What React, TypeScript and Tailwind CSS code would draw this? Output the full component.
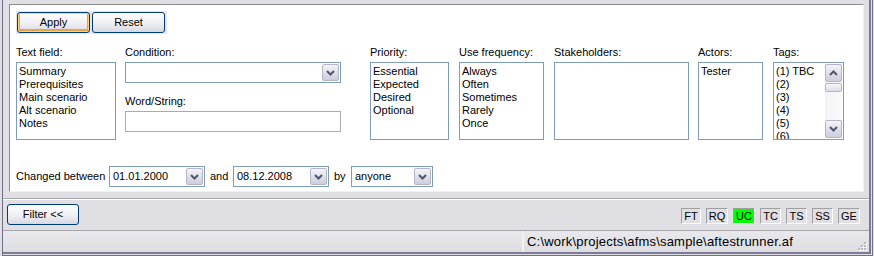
import React from "react";

const listItems = {
    textField: ["Summary", "Prerequisites", "Main scenario", "Alt scenario", "Notes"],
    priority: ["Essential", "Expected", "Desired", "Optional"],
    frequency: ["Always", "Often", "Sometimes", "Rarely", "Once"],
    stakeholders: [] as string[],
    actors: ["Tester"],
    tags: ["(1) TBC", "(2)", "(3)", "(4)", "(5)", "(6)"],
};

const indicators = [
    { label: "FT", w: "w-[20px]" },
    { label: "RQ", w: "w-[22px]" },
    { label: "UC", w: "w-[22px]", active: true },
    { label: "TC", w: "w-[21px]" },
    { label: "TS", w: "w-[21px]" },
    { label: "SS", w: "w-[21px]" },
    { label: "GE", w: "w-[22px]" },
];

function Chevron({ up = false }: { up?: boolean }) {
    return (
        <svg width="9" height="6" viewBox="0 0 9 6">
            <path
                d={up ? "M1 5 L4.5 1.5 L8 5" : "M1 1 L4.5 4.5 L8 1"}
                fill="none"
                stroke="#4d5670"
                strokeWidth="2"
            />
        </svg>
    );
}

function ArrowButton({ up = false, h = "h-[17px]" }: { up?: boolean; h?: string }) {
    return (
        <div
            className={`w-[17px] ${h} shrink-0 rounded-[2px] border border-[#b5b5c9] bg-linear-to-b from-[#f4f4f8] to-[#cdcddc] flex items-center justify-center`}
        >
            <Chevron up={up} />
        </div>
    );
}

function Combo({ value, w }: { value: string; w: string }) {
    return (
        <div className={`${w} h-[21px] border border-[#7f9db9] bg-white flex items-center pl-[3px] pr-[1px]`}>
            <span className="flex-1 whitespace-nowrap">{value}</span>
            <ArrowButton />
        </div>
    );
}

function ListBox({ items, w }: { items: string[]; w: string }) {
    return (
        <div className={`${w} h-[78px] border border-[#7f9db9] bg-white pl-[2px] pt-[2px] overflow-hidden`}>
            {items.map((item) => (
                <div key={item} className="h-[13px] whitespace-nowrap">
                    {item}
                </div>
            ))}
        </div>
    );
}

function Column({ label, className, children }: { label: string; className?: string; children: React.ReactNode }) {
    return (
        <div className={`flex flex-col ${className ?? ""}`}>
            <div className="h-[13px] whitespace-nowrap">{label}</div>
            <div className="mt-[3px]">{children}</div>
        </div>
    );
}

function XpButton({ label, focused = false, w }: { label: string; focused?: boolean; w: string }) {
    return (
        <button
            className={`${w} h-[21px] rounded-[3px] border border-[#003c74] bg-linear-to-b from-white via-[#f1f1f5] to-[#d8d8e2] flex items-center justify-center ${
                focused ? "shadow-[inset_0_0_0_1px_#fbd27f,inset_0_-1px_0_2px_#eea43a]" : ""
            }`}
        >
            {label}
        </button>
    );
}

export default function App() {
    return (
        <div className="w-[874px] h-[256px] bg-[#e0dfe3] pl-[2px] pr-[1px] text-[11px] leading-[13px] text-black font-['Liberation_Sans',Arial,sans-serif] overflow-hidden">
            <div className="h-full border-l border-r border-b border-[#6e6e88] pr-[1px] pb-[1px]">
                <div className="h-full flex flex-col border-r-2 border-b-2 border-[#7b7b95]">
                    {/* Filter panel */}
                    <div className="mt-[4px] ml-[6px] mr-[5px] h-[188px] bg-white border-t border-l border-[#8c8c8c] border-r border-b border-r-[#f3f2ea] border-b-[#f3f2ea] pl-[6px] pt-[6px] flex flex-col">
                        {/* Toolbar */}
                        <div className="w-[151px] h-[23px] bg-[#e6e5e9] p-[1px] flex gap-[2px]">
                            <XpButton label="Apply" focused w="w-[73px]" />
                            <XpButton label="Reset" w="w-[73px]" />
                        </div>

                        {/* Columns */}
                        <div className="mt-[12px] flex items-start">
                            <Column label="Text field:">
                                <ListBox items={listItems.textField} w="w-[100px]" />
                            </Column>
                            <div className="ml-[9px] flex flex-col">
                                <div className="h-[13px]">Condition:</div>
                                <div className="mt-[3px]">
                                    <Combo value="" w="w-[216px]" />
                                </div>
                                <div className="mt-[12px] h-[13px]">Word/String:</div>
                                <div className="mt-[3px] w-[216px] h-[21px] border border-[#a5acb2] bg-white" />
                            </div>
                            <Column label="Priority:" className="ml-[29px]">
                                <ListBox items={listItems.priority} w="w-[79px]" />
                            </Column>
                            <Column label="Use frequency:" className="ml-[10px]">
                                <ListBox items={listItems.frequency} w="w-[85px]" />
                            </Column>
                            <Column label="Stakeholders:" className="ml-[10px]">
                                <ListBox items={listItems.stakeholders} w="w-[135px]" />
                            </Column>
                            <Column label="Actors:" className="ml-[9px]">
                                <ListBox items={listItems.actors} w="w-[65px]" />
                            </Column>
                            <Column label="Tags:" className="ml-[10px]">
                                <div className="w-[71px] h-[78px] border border-[#7f9db9] bg-white flex">
                                    <div className="flex-1 pl-[2px] pt-[2px] overflow-hidden">
                                        {listItems.tags.map((t) => (
                                            <div key={t} className="h-[13px] whitespace-nowrap">
                                                {t}
                                            </div>
                                        ))}
                                    </div>
                                    <div className="w-[17px] my-[1px] mr-[1px] flex flex-col bg-linear-to-r from-[#f3f3f6] to-[#fbfbfd]">
                                        <ArrowButton up h="h-[18px]" />
                                        <div className="mt-[1px] h-[9px] rounded-[2px] border border-[#b5b5c9] bg-linear-to-b from-[#f8f8fb] to-[#dcdce6]" />
                                        <div className="flex-1" />
                                        <ArrowButton h="h-[18px]" />
                                    </div>
                                </div>
                            </Column>
                        </div>

                        {/* Changed between */}
                        <div className="mt-[26px] flex items-center">
                            <span className="w-[93px] whitespace-nowrap">Changed between</span>
                            <Combo value="01.01.2000" w="w-[96px]" />
                            <span className="ml-[5px] w-[23px]">and</span>
                            <Combo value="08.12.2008" w="w-[96px]" />
                            <span className="ml-[5px] w-[17px]">by</span>
                            <Combo value="anyone" w="w-[82px]" />
                        </div>
                    </div>

                    {/* Separator */}
                    <div className="mt-[6px] h-[2px] border-t border-[#a6a6ab] border-b border-b-white" />

                    {/* Filter row */}
                    <div className="h-[30px] flex items-start pl-[4px] pr-[9px]">
                        <XpButton label="Filter <<" w="w-[72px] mt-[4px]" />
                        <div className="ml-auto mt-[8px] flex gap-[5px]">
                            {indicators.map((ind) => (
                                <div
                                    key={ind.label}
                                    className={`${ind.w} h-[16px] border-t border-l border-[#a0a0a0] border-r border-b border-r-white border-b-white flex items-center justify-center ${
                                        ind.active ? "bg-[#00ff00]" : ""
                                    }`}
                                >
                                    {ind.label}
                                </div>
                            ))}
                        </div>
                    </div>

                    {/* Status bar */}
                    <div className="flex-1 flex border-t border-[#a6a6ab] bg-linear-to-b from-[#e9e9ed] to-[#dcdce1]">
                        <div className="w-[519px]" />
                        <div className="border-l-2 border-[#f4f2e6] pl-[3px] flex items-center text-[13px] tracking-[0.2px] whitespace-nowrap">
                            C:\work\projects\afms\sample\aftestrunner.af
                        </div>
                        <div className="ml-auto self-end mr-[2px] mb-[1px]">
                            <svg width="10" height="10" viewBox="0 0 10 10">
                                {[
                                    [7, 1],
                                    [4, 4],
                                    [7, 4],
                                    [1, 7],
                                    [4, 7],
                                    [7, 7],
                                ].map(([x, y]) => (
                                    <g key={`${x}-${y}`}>
                                        <rect x={x + 1} y={y + 1} width="2" height="2" fill="#ffffff" />
                                        <rect x={x} y={y} width="2" height="2" fill="#b9b9c4" />
                                    </g>
                                ))}
                            </svg>
                        </div>
                    </div>
                </div>
            </div>
        </div>
    );
}
